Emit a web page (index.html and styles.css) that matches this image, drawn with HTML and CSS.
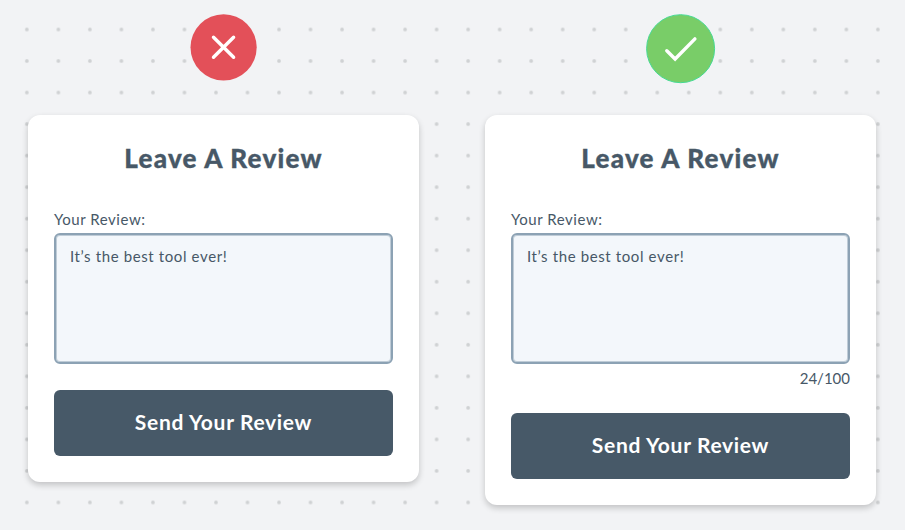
FILE: index.html
```html
<!DOCTYPE html>
<html lang="en">
<head>
<meta charset="utf-8">
<title>Leave A Review</title>
<link rel="stylesheet" href="styles.css">
</head>
<body>
<svg class="dots" aria-hidden="true">
  <defs>
    <pattern id="dot-grid" x="11.1" y="13.8" width="31.52" height="31.53" patternUnits="userSpaceOnUse">
      <circle cx="15.76" cy="15.76" r="1.85"/>
    </pattern>
  </defs>
  <rect width="100%" height="100%" fill="url(#dot-grid)"/>
</svg>
<main class="comparison">
  <section class="example">
    <div class="verdict">
      <svg width="70" height="70" viewBox="0 0 70 70">
        <circle class="bad" cx="34.6" cy="33.3" r="33.1"/>
        <path class="mark" d="M24.5 23.2 44.6 43.3M44.6 23.2 24.5 43.3"/>
      </svg>
    </div>
    <form class="card">
      <h2 class="title">Leave A Review</h2>
      <label class="label" for="review-a">Your Review:</label>
      <textarea class="field" id="review-a" spellcheck="false">It’s the best tool ever!</textarea>
      <button class="send" type="button">Send Your Review</button>
    </form>
  </section>
  <section class="example">
    <div class="verdict">
      <svg width="70" height="70" viewBox="0 0 70 70">
        <circle class="good" cx="34.6" cy="34.7" r="34"/>
        <path class="mark" d="M20.8 36.8 29.1 45 48.9 24.9"/>
      </svg>
    </div>
    <form class="card">
      <h2 class="title">Leave A Review</h2>
      <label class="label" for="review-b">Your Review:</label>
      <textarea class="field" id="review-b" spellcheck="false">It’s the best tool ever!</textarea>
      <div class="count">24/100</div>
      <button class="send" type="button">Send Your Review</button>
    </form>
  </section>
</main>
</body>
</html>
```
FILE: styles.css
```css
* { box-sizing: border-box; }

body {
  margin: 0;
  height: 530px;
  overflow: hidden;
  background: #f2f3f5;
  color: #475867;
  font-family: Lato, "Liberation Sans", sans-serif;
}

.dots {
  position: absolute;
  inset: 0;
  width: 905px;
  height: 530px;
  fill: #cfd1d3;
}

.comparison {
  position: relative;
  display: flex;
  align-items: flex-start;
  gap: 66px;
  padding: 14px 0 0 28px;
}

.example { width: 391px; }

.verdict {
  display: flex;
  justify-content: center;
  height: 101px;
}

.bad { fill: #e35059; }
.good { fill: #79cd68; stroke: #46d993; stroke-width: 1; }
.mark { fill: none; stroke: #fff; stroke-width: 3.4; stroke-linecap: round; }

.card {
  display: flex;
  flex-direction: column;
  padding: 25px 26px 26px;
  border-radius: 12px;
  background: #fff;
  box-shadow: 0 3px 6px rgba(0, 0, 0, .2);
}

.title {
  margin: 0 0 34px;
  font-size: 26px;
  font-weight: 900;
  line-height: 36px;
  letter-spacing: 1.25px;
  text-align: center;
  -webkit-text-stroke: .35px currentColor;
}

.label {
  height: 23px;
  font-size: 15px;
  line-height: 18px;
  letter-spacing: .55px;
}

.field {
  display: block;
  width: 100%;
  height: 131px;
  padding: 11px 14px;
  border: 2px solid #8ca2b4;
  border-radius: 6px;
  background: #f3f7fb;
  box-shadow: inset 0 0 0 1px rgba(140, 162, 180, .5);
  color: inherit;
  font: 15px/20px Lato, "Liberation Sans", sans-serif;
  letter-spacing: .62px;
  resize: none;
}

.count {
  height: 23px;
  padding-top: 4px;
  font-size: 15px;
  line-height: 20px;
  text-align: right;
}

.send {
  height: 66px;
  margin-top: 26px;
  padding: 0 0 2px;
  border: 0;
  border-radius: 6px;
  background: #475968;
  color: #fff;
  font: 700 21px/28px Lato, "Liberation Sans", sans-serif;
  letter-spacing: .68px;
}
```
